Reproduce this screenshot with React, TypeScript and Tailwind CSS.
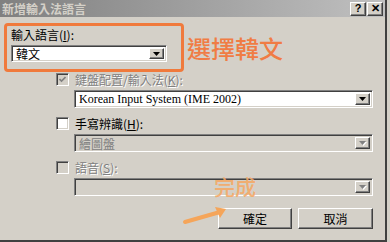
import React from "react";

const ui = { fontFamily: '"Noto Sans CJK TC", "Liberation Sans", sans-serif' };
const serif = { fontFamily: '"Liberation Serif", "Noto Sans CJK TC", serif' };

const Arrow = ({ disabled }: { disabled?: boolean }) => (
  <svg width="7" height="4" viewBox="0 0 7 4" className={disabled ? "drop-shadow-[1px_1px_0_#ffffff]" : ""}>
    <path d="M0 0 H7 L3.5 4 Z" fill={disabled ? "#808080" : "#000000"} />
  </svg>
);

const Combo = ({
  text,
  width,
  height,
  disabled,
  textStyle,
}: {
  text?: string;
  width: string;
  height: string;
  disabled?: boolean;
  textStyle?: React.CSSProperties;
}) => (
  <div
    className={`${width} ${height} flex items-stretch border-t border-l border-t-[#808080] border-l-[#808080] border-b border-r border-b-white border-r-white shadow-[inset_1px_1px_0_#404040,inset_-1px_-1px_0_#d4d0c8] p-[2px] ${
      disabled ? "bg-[#d4d0c8]" : "bg-white"
    }`}
  >
    <div
      className={`flex-1 pl-[2px] text-[12px] leading-[13px] flex items-center ${
        disabled ? "text-[#808080]" : "text-black"
      }`}
      style={textStyle ?? ui}
    >
      {text}
    </div>
    <div className="w-[15px] bg-[#d4d0c8] flex items-center justify-center border-t border-l border-t-white border-l-white border-b border-r border-b-[#404040] border-r-[#404040] shadow-[inset_-1px_-1px_0_#808080]">
      <Arrow disabled={disabled} />
    </div>
  </div>
);

const Check = ({ checked, disabled }: { checked?: boolean; disabled?: boolean }) => (
  <div
    className={`w-[13px] h-[13px] flex items-center justify-center border-t border-l border-t-[#808080] border-l-[#808080] border-b border-r border-b-white border-r-white shadow-[inset_1px_1px_0_#404040,inset_-1px_-1px_0_#d4d0c8] ${
      disabled ? "bg-[#d4d0c8]" : "bg-white"
    }`}
  >
    {checked && (
      <svg width="7" height="7" viewBox="0 0 7 7">
        <path d="M0.5 3 L2.5 5 L6.5 1" stroke={disabled ? "#808080" : "#000"} strokeWidth="1.6" fill="none" />
      </svg>
    )}
  </div>
);

const Label = ({ children, disabled }: { children: React.ReactNode; disabled?: boolean }) => (
  <span
    className={`text-[12px] leading-[13px] ${
      disabled ? "text-[#808080] [text-shadow:1px_1px_0_#ffffff]" : "text-black"
    }`}
    style={ui}
  >
    {children}
  </span>
);

const Button = ({ children, width }: { children: React.ReactNode; width: string }) => (
  <div
    className={`${width} h-[21px] bg-[#d4d0c8] flex items-center justify-center border-t border-l border-t-white border-l-white border-b border-r border-b-[#404040] border-r-[#404040] shadow-[inset_-1px_-1px_0_#808080] text-[12px] text-black`}
    style={ui}
  >
    {children}
  </div>
);

const TitleButton = ({ children }: { children: React.ReactNode }) => (
  <div className="w-[16px] h-[14px] bg-[#d4d0c8] flex items-center justify-center border-t border-l border-t-white border-l-white border-b border-r border-b-[#404040] border-r-[#404040] shadow-[inset_-1px_-1px_0_#808080] text-[11px] font-bold leading-none text-black" style={{ fontFamily: '"Liberation Sans", sans-serif' }}>
    {children}
  </div>
);

export default function App() {
  return (
    <div className="w-[390px] h-[242px] bg-[#d4d0c8] flex overflow-hidden">
      <div className="w-[387px] h-[242px] flex flex-col border-r-2 border-b-2 border-r-[#404040] border-b-[#404040] relative">
        {/* title bar */}
        <div className="h-[17px] bg-linear-to-r from-[#808080] to-[#c0c0c0] flex items-center justify-between pl-[2px] pr-[2px]">
          <span className="text-[12px] font-bold text-[#d4d0c8] leading-none" style={ui}>
            新增輸入法語言
          </span>
          <div className="flex gap-[1px]">
            <TitleButton>?</TitleButton>
            <TitleButton>✕</TitleButton>
          </div>
        </div>

        <div className="flex-1 pl-[4px]">
          <div className="mt-[6px] flex items-start">
            <div className="w-[180px] h-[49px] border-[3px] border-[#f07a3c] rounded-[4px] pl-[4px] pt-[1px]">
              <div className="h-[14px] flex items-center">
                <Label>
                  輸入語言(<u>I</u>):
                </Label>
              </div>
              <div className="mt-[4px]">
                <Combo text="韓文" width="w-[156px]" height="h-[17px]" />
              </div>
            </div>
            <div className="ml-[3px] mt-[11px] text-[24px] leading-[28px] font-medium text-[#f07c44]" style={ui}>
              選擇韓文
            </div>
          </div>

          <div className="pl-[52px]">
            <div className="mt-[1px] h-[13px] flex items-center gap-[6px]">
              <Check checked disabled />
              <Label disabled>
                鍵盤配置/輸入法(<u>K</u>):
              </Label>
            </div>
            <div className="mt-[4px] ml-[18px]">
              <Combo text="Korean Input System (IME 2002)" width="w-[299px]" height="h-[18px]" textStyle={serif} />
            </div>

            <div className="mt-[9px] h-[13px] flex items-center gap-[6px]">
              <Check />
              <Label>
                手寫辨識(<u>H</u>):
              </Label>
            </div>
            <div className="mt-[4px] ml-[18px]">
              <Combo text="繪圖盤" width="w-[299px]" height="h-[18px]" disabled />
            </div>

            <div className="mt-[9px] h-[13px] flex items-center gap-[6px]">
              <Check disabled />
              <Label disabled>
                語音(<u>S</u>):
              </Label>
            </div>
            <div className="mt-[4px] ml-[18px]">
              <Combo width="w-[299px]" height="h-[18px]" disabled />
            </div>
          </div>

          <div className="mt-[12px] flex justify-end gap-[6px] pr-[12px]">
            <Button width="w-[74px]">確定</Button>
            <Button width="w-[75px]">取消</Button>
          </div>
        </div>

        {/* annotation overlay */}
        <div className="absolute left-[214px] top-[173px] text-[21px] leading-[26px] font-medium text-[#f5a865]/90" style={ui}>
          完成
        </div>
        <svg className="absolute left-[182px] top-[204px]" width="50" height="22" viewBox="0 0 50 22">
          <path d="M3 18 L38 8" stroke="#f5a55a" strokeWidth="4" strokeLinecap="round" />
          <path d="M44 5 L33 3 L38 14 Z" fill="#f5a55a" />
        </svg>
      </div>
    </div>
  );
}
